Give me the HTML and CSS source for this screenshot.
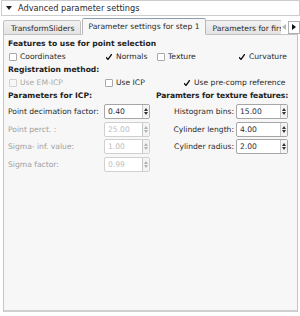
FILE: index.html
```html
<!DOCTYPE html>
<html lang="en">
<head>
    <meta charset="UTF-8">
    <title>Advanced parameter settings</title>
    <link rel="stylesheet" href="styles.css">
</head>
<body>
    <div class="group-header">
        <svg class="caret" width="6" height="4" viewBox="0 0 6 4"><path d="M0 0 L6 0 L3 4 Z" fill="#222"/></svg>
        <span>Advanced parameter settings</span>
    </div>

    <div class="tabbar">
        <div class="tabs">
            <div class="tab">TransformSliders</div>
            <div class="tab active">Parameter settings for step 1</div>
            <div class="tab">Parameters for first step</div>
        </div>
        <div class="scroll-btns">
            <span class="scroll-left"><svg width="4" height="6" viewBox="0 0 4 6"><path d="M4 0 L4 6 L0 3 Z" fill="#b5b5b5"/></svg></span>
            <span class="scroll-right"><svg width="4" height="6" viewBox="0 0 4 6"><path d="M0 0 L0 6 L4 3 Z" fill="#111"/></svg></span>
        </div>
    </div>

    <div class="panel">
        <div class="heading">Features to use for point selection</div>
        <div class="check-row features">
            <label class="check"><span class="box"></span>Coordinates</label>
            <label class="check"><span class="box checked"></span>Normals</label>
            <label class="check"><span class="box"></span>Texture</label>
            <label class="check"><span class="box checked"></span>Curvature</label>
        </div>

        <div class="heading">Registration method:</div>
        <div class="check-row method">
            <label class="check disabled"><span class="box"></span>Use EM-ICP</label>
            <label class="check"><span class="box"></span>Use ICP</label>
            <label class="check"><span class="box checked"></span>Use pre-comp reference</label>
        </div>

        <div class="params">
            <div class="heading left">Parameters for ICP:</div>
            <div class="heading right">Paramters for texture features:</div>

            <div class="label">Point decimation factor:</div>
            <div class="spin"><span class="value">0.40</span><span class="arrows"><i class="up"></i><i class="down"></i></span></div>
            <div class="label r">Histogram bins:</div>
            <div class="spin"><span class="value">15.00</span><span class="arrows"><i class="up"></i><i class="down"></i></span></div>

            <div class="label disabled">Point perct. :</div>
            <div class="spin disabled"><span class="value">25.00</span><span class="arrows"><i class="up"></i><i class="down"></i></span></div>
            <div class="label r">Cylinder length:</div>
            <div class="spin"><span class="value">4.00</span><span class="arrows"><i class="up"></i><i class="down"></i></span></div>

            <div class="label disabled">Sigma- inf. value:</div>
            <div class="spin disabled"><span class="value">1.00</span><span class="arrows"><i class="up"></i><i class="down"></i></span></div>
            <div class="label r">Cylinder radius:</div>
            <div class="spin"><span class="value">2.00</span><span class="arrows"><i class="up"></i><i class="down"></i></span></div>

            <div class="label disabled">Sigma factor:</div>
            <div class="spin disabled"><span class="value">0.99</span><span class="arrows"><i class="up"></i><i class="down"></i></span></div>
        </div>
    </div>
</body>
</html>
```

FILE: styles.css
```css
body {
    font-family: 'DejaVu Sans', 'Liberation Sans', sans-serif;
    font-size: 7.6px;
    margin: 0;
    padding: 0;
    background-color: #ffffff;
    color: #2a2a2a;
    width: 300px;
    height: 316px;
    overflow: hidden;
}
.group-header {
    display: flex;
    align-items: center;
    height: 14px;
    margin: 0 0 0 1px;
    border: 1px solid #cdcdcd;
    background-color: #fff;
    font-size: 8.2px;
}
.caret {
    margin: 0 6px 0 4px;
}
.tabbar {
    display: flex;
    align-items: flex-end;
    height: 17px;
    margin-top: 2px;
    position: relative;
    z-index: 1;
    margin-bottom: -1px;
}
.tabs {
    display: flex;
    align-items: flex-end;
    width: 283px;
    overflow: hidden;
    padding-left: 3px;
    box-sizing: border-box;
}
.tab {
    flex: none;
    height: 15px;
    line-height: 15px;
    padding: 0 6px 0 7px;
    border: 1px solid #c2c2c2;
    border-radius: 2px 2px 0 0;
    background: linear-gradient(#f2f2f2, #e3e3e3);
    box-sizing: border-box;
    white-space: nowrap;
}
.tab.active {
    height: 17px;
    line-height: 16px;
    background: #f7f7f7;
    border-color: #b8b8b8;
    border-top-color: #8d9db0;
    border-bottom-color: #f7f7f7;
    margin: 0 -1px 0 1px;
    position: relative;
    padding: 0 5px 0 5px;
}
.scroll-btns {
    display: flex;
    align-items: center;
    height: 12px;
    margin-bottom: 2px;
}
.scroll-left {
    width: 6px;
    display: flex;
    justify-content: center;
}
.scroll-right {
    display: flex;
    align-items: center;
    justify-content: center;
    width: 10px;
    height: 11px;
    border: 1px solid #b0b0b0;
    background: #fff;
    margin-left: 1px;
}
.panel {
    height: 278px;
    margin: 0 2px 0 3px;
    border: 1px solid #c4c4c4;
    border-bottom: 2px solid #cfcfcf;
    background-color: #f7f7f7;
    box-sizing: border-box;
    padding: 2px 0 0 4px;
}
.heading {
    font-weight: bold;
    height: 13px;
    line-height: 13px;
    color: #1e1e1e;
    white-space: nowrap;
}
.check-row {
    display: grid;
    height: 13px;
    align-items: center;
}
.check-row.features {
    grid-template-columns: 96px 52px 81px auto;
}
.check-row.method {
    grid-template-columns: 96px 78px auto;
}
.check {
    display: flex;
    align-items: center;
    white-space: nowrap;
}
.check.disabled {
    color: #a8a8a8;
}
.box {
    width: 8px;
    height: 8px;
    margin: 0 3px 0 1px;
    border: 1px solid #a9a9a9;
    background: #fff;
    border-radius: 1px;
    box-sizing: border-box;
    flex: none;
}
.check.disabled .box {
    border-color: #d2d2d2;
    background: #f7f7f7;
}
.box.checked {
    border-color: #f7f7f7;
    background: #f7f7f7 url("data:image/svg+xml,%3Csvg xmlns='http://www.w3.org/2000/svg' width='8' height='8'%3E%3Cpath d='M1 4.2 L3 6.4 L7 0.8' stroke='%23111' stroke-width='1.3' fill='none'/%3E%3C/svg%3E") no-repeat center;
}
.params {
    display: grid;
    grid-template-columns: 96px 46px 86px 52px;
    grid-template-rows: 13px repeat(4, 16px);
    row-gap: 1.6px;
    align-items: center;
}
.heading.left {
    grid-column: 1 / 3;
}
.heading.right {
    grid-column: 3 / 5;
    padding-left: 6px;
    letter-spacing: -0.1px;
}
.label {
    white-space: nowrap;
}
.label.r {
    text-align: right;
    padding-right: 2px;
}
.label.disabled {
    color: #a0a0a0;
}
.spin {
    display: flex;
    height: 15px;
    box-sizing: border-box;
    border: 1px solid #a6a6a6;
    border-radius: 2px;
    background: #fff;
}
.spin .value {
    flex: 1;
    line-height: 13px;
    padding-left: 3px;
    color: #1f2a44;
}
.spin .arrows {
    width: 6px;
    display: flex;
    flex-direction: column;
    justify-content: center;
    align-items: center;
    gap: 1px;
    border-left: 1px solid #c6c6c6;
    background: #f4f4f4;
}
.arrows i {
    width: 0;
    height: 0;
    border-left: 2px solid transparent;
    border-right: 2px solid transparent;
}
.arrows .up {
    border-bottom: 3px solid #333;
}
.arrows .down {
    border-top: 3px solid #333;
}
.spin.disabled {
    border-color: #d0d0d0;
}
.spin.disabled .value {
    color: #c0c0c0;
}
.spin.disabled .arrows .up {
    border-bottom-color: #b0b0b0;
}
.spin.disabled .arrows .down {
    border-top-color: #b0b0b0;
}
```
